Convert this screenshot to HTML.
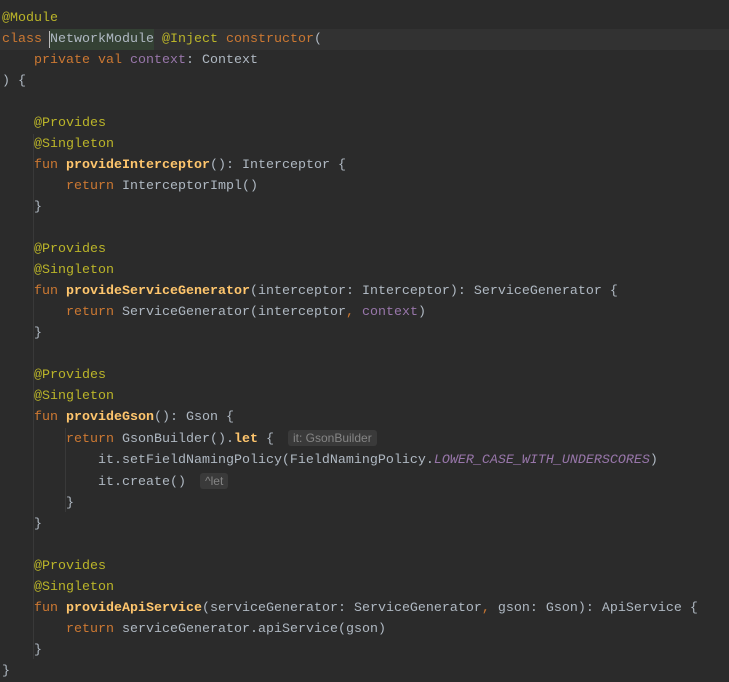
<!DOCTYPE html>
<html><head><meta charset="utf-8"><style>
html,body{margin:0;padding:0;background:#2b2b2b;width:729px;height:678px;overflow:hidden}
pre{margin:0;padding:8px 0 0 2px;font-family:"Liberation Mono",monospace;font-size:13.33px;line-height:21px;color:#afb8c2;position:relative}
.k{color:#cc7832}.a{color:#bbb529}.p{color:#9876aa}.f{color:#ffc66d;font-weight:bold}.c{color:#9876aa;font-style:italic}
.l{color:#ffc66d;font-weight:bold}
.h{font-family:"Liberation Sans",sans-serif;font-size:12px;color:#858585;background:#3a3a3a;border-radius:3px;padding:1px 5px;margin-left:6px}
.cur{position:absolute;left:0;top:29px;width:729px;height:21px;background:#323232}
.sel{position:absolute;left:50px;top:29px;width:104px;height:21px;background:#344134}
.g{position:absolute;width:1px;background:#393939}
.caret{position:absolute;left:49px;top:31px;width:1px;height:17px;background:#bbb}
</style></head><body>
<div class="cur"></div><div class="sel"></div><div class="caret"></div>
<div class="g" style="left:33px;top:134px;height:525px"></div>
<div class="g" style="left:65px;top:428px;height:84px"></div>
<pre style="position:absolute;top:0;left:0">
<span class="a">@Module</span>
<span class="k">class </span>NetworkModule <span class="a">@Inject </span><span class="k">constructor</span>(
    <span class="k">private val </span><span class="p">context</span>: Context
) {

    <span class="a">@Provides</span>
    <span class="a">@Singleton</span>
    <span class="k">fun </span><span class="f">provideInterceptor</span>(): Interceptor {
        <span class="k">return </span>InterceptorImpl()
    }

    <span class="a">@Provides</span>
    <span class="a">@Singleton</span>
    <span class="k">fun </span><span class="f">provideServiceGenerator</span>(interceptor: Interceptor): ServiceGenerator {
        <span class="k">return </span>ServiceGenerator(interceptor<span class="k">, </span><span class="p">context</span>)
    }

    <span class="a">@Provides</span>
    <span class="a">@Singleton</span>
    <span class="k">fun </span><span class="f">provideGson</span>(): Gson {
        <span class="k">return </span>GsonBuilder().<span class="l">let</span> { <span class="h">it: GsonBuilder</span>
            it.setFieldNamingPolicy(FieldNamingPolicy.<span class="c">LOWER_CASE_WITH_UNDERSCORES</span>)
            it.create() <span class="h">^let</span>
        }
    }

    <span class="a">@Provides</span>
    <span class="a">@Singleton</span>
    <span class="k">fun </span><span class="f">provideApiService</span>(serviceGenerator: ServiceGenerator<span class="k">, </span>gson: Gson): ApiService {
        <span class="k">return </span>serviceGenerator.apiService(gson)
    }
}</pre>
</body></html>
